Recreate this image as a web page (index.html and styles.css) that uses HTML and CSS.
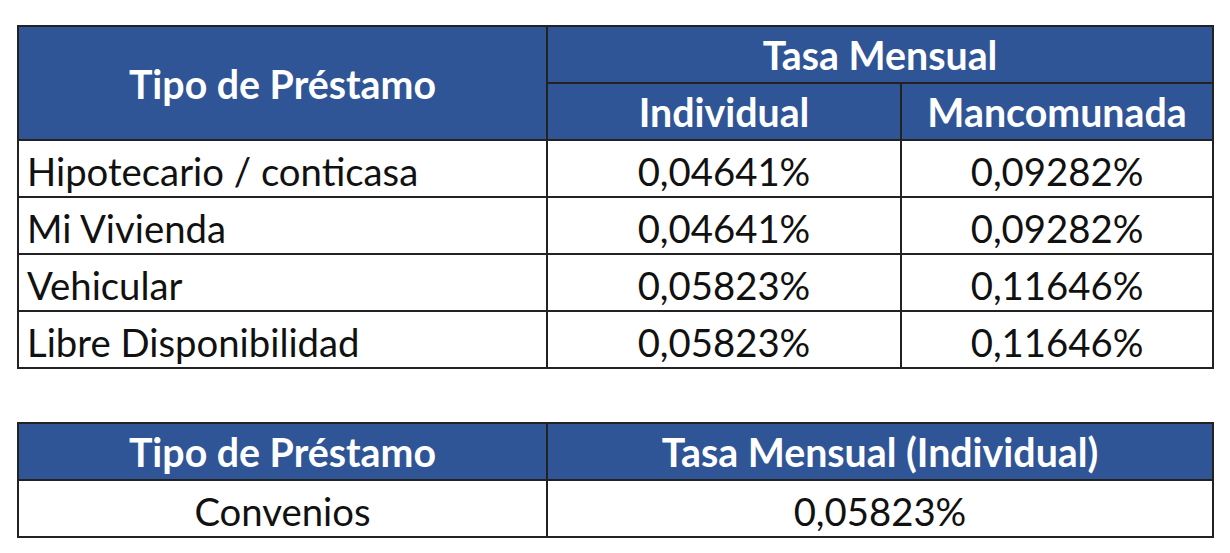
FILE: index.html
```html
<!DOCTYPE html>
<html lang="es">
<head>
<meta charset="utf-8">
<title>Tasas</title>
<link rel="stylesheet" href="styles.css">
</head>
<body>
<div class="page">
  <table class="rates">
    <colgroup>
      <col class="c1"><col class="c2"><col class="c3">
    </colgroup>
    <thead>
      <tr>
        <th rowspan="2" class="type-head">Tipo de Préstamo</th>
        <th colspan="2">Tasa Mensual</th>
      </tr>
      <tr>
        <th>Individual</th>
        <th>Mancomunada</th>
      </tr>
    </thead>
    <tbody>
      <tr><td class="name">Hipotecario / conticasa</td><td>0,04641%</td><td>0,09282%</td></tr>
      <tr><td class="name">Mi Vivienda</td><td>0,04641%</td><td>0,09282%</td></tr>
      <tr><td class="name">Vehicular</td><td>0,05823%</td><td>0,11646%</td></tr>
      <tr><td class="name">Libre Disponibilidad</td><td>0,05823%</td><td>0,11646%</td></tr>
    </tbody>
  </table>

  <table class="rates second">
    <colgroup>
      <col class="c1"><col class="c23">
    </colgroup>
    <thead>
      <tr><th>Tipo de Préstamo</th><th>Tasa Mensual (Individual)</th></tr>
    </thead>
    <tbody>
      <tr><td>Convenios</td><td>0,05823%</td></tr>
    </tbody>
  </table>
</div>
</body>
</html>
```

FILE: styles.css
```css
html, body {
  margin: 0;
  padding: 0;
  background: #ffffff;
}

.page {
  padding: 25px 0 0 17px;
  display: flex;
  flex-direction: column;
  gap: 53px;
}

.rates {
  border-collapse: collapse;
  width: 1195px;
  table-layout: fixed;
  font-family: Lato, "Open Sans", sans-serif;
  font-size: 38.3px;
  color: #111;
}

.rates .c1 { width: 529px; }
.rates .c2 { width: 354px; }
.rates .c3 { width: 312px; }
.rates .c23 { width: 666px; }

.rates th,
.rates td {
  border: 2px solid #222;
  height: 51px;
  padding: 4px 8px 0;
  text-align: center;
  vertical-align: middle;
  line-height: 40px;
  white-space: nowrap;
}

.rates th {
  background: #2f5597;
  color: #ffffff;
  font-weight: bold;
  font-size: 39.3px;
  height: 54px;
  padding-top: 1px;
}

.rates td.name {
  text-align: left;
}
```
